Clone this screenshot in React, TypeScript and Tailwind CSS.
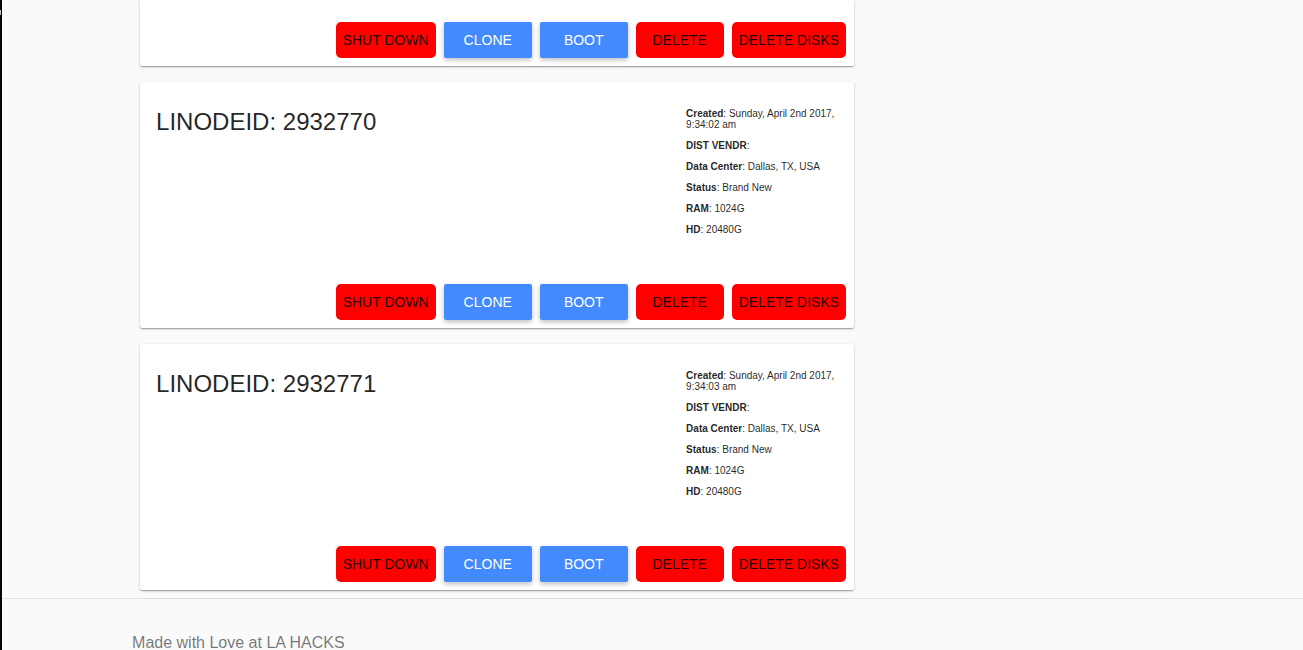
import React from "react";

type Linode = {
  id: string;
  created: string;
  vendor: string;
  dataCenter: string;
  status: string;
  ram: string;
  hd: string;
};

const linodes: Linode[] = [
  {
    id: "2932770",
    created: "Sunday, April 2nd 2017, 9:34:02 am",
    vendor: "",
    dataCenter: "Dallas, TX, USA",
    status: "Brand New",
    ram: "1024G",
    hd: "20480G",
  },
  {
    id: "2932771",
    created: "Sunday, April 2nd 2017, 9:34:03 am",
    vendor: "",
    dataCenter: "Dallas, TX, USA",
    status: "Brand New",
    ram: "1024G",
    hd: "20480G",
  },
];

const cardStyle =
  "bg-white shadow-[0_1px_3px_0_rgba(0,0,0,0.2),0_1px_1px_0_rgba(0,0,0,0.14),0_2px_1px_-1px_rgba(0,0,0,0.12)]";

function DangerButton({ children }: { children: React.ReactNode }) {
  return (
    <button
      type="button"
      className="h-9 min-w-22 rounded-[5px] bg-[#ff0000] px-[7px] text-sm whitespace-nowrap text-black/87"
    >
      {children}
    </button>
  );
}

function PrimaryButton({ children }: { children: React.ReactNode }) {
  return (
    <button
      type="button"
      className="h-9 min-w-22 rounded-xs bg-[#448aff] px-[7px] text-sm whitespace-nowrap text-white shadow-[0_2px_5px_0_rgba(0,0,0,0.26)]"
    >
      {children}
    </button>
  );
}

function Actions() {
  return (
    <div className="flex justify-end gap-2 p-2">
      <DangerButton>SHUT DOWN</DangerButton>
      <PrimaryButton>CLONE</PrimaryButton>
      <PrimaryButton>BOOT</PrimaryButton>
      <DangerButton>DELETE</DangerButton>
      <DangerButton>DELETE DISKS</DangerButton>
    </div>
  );
}

function Detail({ label, value }: { label: string; value: string }) {
  return (
    <p>
      <b>{label}</b>: {value}
    </p>
  );
}

function LinodeCard({ linode }: { linode: Linode }) {
  return (
    <article className={`rounded-xs ${cardStyle}`}>
      <div className="flex justify-between px-4 pt-[26px] pb-[41px]">
        <h2 className="text-2xl leading-7">LINODEID: {linode.id}</h2>
        <div className="flex w-38 flex-col gap-2.5 text-[10px] leading-[11px]">
          <Detail label="Created" value={linode.created} />
          <Detail label="DIST VENDR" value={linode.vendor} />
          <Detail label="Data Center" value={linode.dataCenter} />
          <Detail label="Status" value={linode.status} />
          <Detail label="RAM" value={linode.ram} />
          <Detail label="HD" value={linode.hd} />
        </div>
      </div>
      <Actions />
    </article>
  );
}

export default function App() {
  return (
    <div className="flex h-screen overflow-hidden bg-[#fafafa] font-['Liberation_Sans',Arial,sans-serif] text-black/87">
      <div className="w-0.5 shrink-0 bg-[#05050f] pt-2.5">
        <div className="h-[5px] w-px bg-[#c8c0c0]" />
      </div>
      <div className="min-w-0 flex-1">
        <main className="px-[10%]">
          <div className="flex max-w-[730px] flex-col gap-4 px-2 pb-2">
            <article className={`rounded-b-xs pt-3.5 ${cardStyle}`}>
              <Actions />
            </article>
            {linodes.map((linode) => (
              <LinodeCard key={linode.id} linode={linode} />
            ))}
          </div>
        </main>
        <footer className="border-t border-[#e1e1e1] px-[10%] pt-8 text-base text-black/54">
          Made with Love at LA HACKS
        </footer>
      </div>
    </div>
  );
}
